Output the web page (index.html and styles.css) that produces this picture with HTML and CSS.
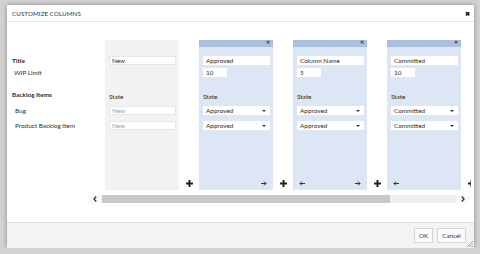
FILE: index.html
```html
<!DOCTYPE html>
<html>
<head>
<meta charset="utf-8">
<link rel="stylesheet" href="styles.css">
</head>
<body>
<div class="dialog">
  <div class="titlebar">
    <span class="title">CUSTOMIZE COLUMNS</span>
    <span class="close">&#10006;</span>
  </div>
  <div class="body">
    <div class="labels">
      <div class="head-spacer"></div>
      <div class="lrow r-name bold">Title</div>
      <div class="lrow r-wip sub">WIP Limit</div>
      <div class="lrow r-group bold">Backlog Items</div>
      <div class="lrow r-s1 sub2">Bug</div>
      <div class="lrow r-s2 sub2">Product Backlog Item</div>
    </div>
    <div class="board">
      <div class="viewport">
        <div class="track">
          <div class="col col-first">
            <div class="col-head"></div>
            <div class="field r-name">New</div>
            <div class="spacer r-wip"></div>
            <div class="state-label">State</div>
            <div class="field r-s1 placeholder">New</div>
            <div class="field r-s2 placeholder">New</div>
          </div>
          <div class="gap"><svg class="plus" width="7" height="7" viewBox="0 0 7 7"><path d="M3.5 0v7M0 3.5h7" stroke="#222" stroke-width="2"/></svg></div>

          <div class="col">
            <div class="col-head"><span class="x">&#10005;</span></div>
            <div class="field r-name">Approved</div>
            <div class="field r-wip wip">10</div>
            <div class="state-label">State</div>
            <div class="field select r-s1">Approved<span class="caret"></span></div>
            <div class="field select r-s2">Approved<span class="caret"></span></div>
            <div class="col-foot end">
              <svg width="6" height="5" viewBox="0 0 6 5"><path d="M0 2.5h5M3 0.5l2 2-2 2" stroke="#333" stroke-width="1" fill="none"/></svg>
            </div>
          </div>
          <div class="gap"><svg class="plus" width="7" height="7" viewBox="0 0 7 7"><path d="M3.5 0v7M0 3.5h7" stroke="#222" stroke-width="2"/></svg></div>

          <div class="col">
            <div class="col-head"><span class="x">&#10005;</span></div>
            <div class="field r-name">Column Name</div>
            <div class="field r-wip wip">5</div>
            <div class="state-label">State</div>
            <div class="field select r-s1">Approved<span class="caret"></span></div>
            <div class="field select r-s2">Approved<span class="caret"></span></div>
            <div class="col-foot between">
              <svg width="6" height="5" viewBox="0 0 6 5"><path d="M6 2.5h-5M3 0.5l-2 2 2 2" stroke="#333" stroke-width="1" fill="none"/></svg>
              <svg width="6" height="5" viewBox="0 0 6 5"><path d="M0 2.5h5M3 0.5l2 2-2 2" stroke="#333" stroke-width="1" fill="none"/></svg>
            </div>
          </div>
          <div class="gap"><svg class="plus" width="7" height="7" viewBox="0 0 7 7"><path d="M3.5 0v7M0 3.5h7" stroke="#222" stroke-width="2"/></svg></div>

          <div class="col">
            <div class="col-head"><span class="x">&#10005;</span></div>
            <div class="field r-name">Committed</div>
            <div class="field r-wip wip">10</div>
            <div class="state-label">State</div>
            <div class="field select r-s1">Committed<span class="caret"></span></div>
            <div class="field select r-s2">Committed<span class="caret"></span></div>
            <div class="col-foot start">
              <svg width="6" height="5" viewBox="0 0 6 5"><path d="M6 2.5h-5M3 0.5l-2 2 2 2" stroke="#333" stroke-width="1" fill="none"/></svg>
            </div>
          </div>
          <div class="gap"><svg class="plus" width="7" height="7" viewBox="0 0 7 7"><path d="M3.5 0v7M0 3.5h7" stroke="#222" stroke-width="2"/></svg></div>
        </div>
      </div>
      <div class="scrollbar">
        <div class="sb-btn"><svg width="4" height="6" viewBox="0 0 4 6"><path d="M3.2 0.5L1 3l2.2 2.5" stroke="#333" stroke-width="1.3" fill="none"/></svg></div>
        <div class="sb-thumb"></div>
        <div class="sb-rest"></div>
        <div class="sb-btn"><svg width="4" height="6" viewBox="0 0 4 6"><path d="M0.8 0.5L3 3 0.8 5.5" stroke="#333" stroke-width="1.3" fill="none"/></svg></div>
      </div>
    </div>
  </div>
  <div class="footer">
    <button class="btn">OK</button>
    <button class="btn">Cancel</button>
  </div>
  <svg class="grip" width="6" height="6" viewBox="0 0 6 6"><path d="M6 0L0 6M6 2.5L2.5 6M6 5L5 6" stroke="#888" stroke-width="0.8"/></svg>
</div>
</body>
</html>
```

FILE: styles.css
```css
* { box-sizing: border-box; }
html, body { margin: 0; }
body {
  background: #d3d3d3;
  padding: 5px 0 0 7px;
  font-family: Lato, "Open Sans", sans-serif;
  font-size: 6.4px;
  color: #2b2b2b;
}
.dialog {
  position: relative;
  width: 467px;
  height: 243px;
  background: #fff;
  box-shadow: 0 0 5px rgba(0,0,0,0.35);
  display: flex;
  flex-direction: column;
}
.titlebar {
  height: 17px;
  border-bottom: 1px solid #e4e4e4;
  display: flex;
  align-items: center;
  justify-content: space-between;
  padding: 0 4px 0 5px;
  flex: none;
}
.title { font-size: 6.2px; color: #333; letter-spacing: 0.1px; }
.close { font-size: 6px; color: #111; font-weight: bold; }
.body {
  flex: 1;
  display: flex;
}
.labels {
  width: 80px;
  padding-top: 18px;
  display: flex;
  flex-direction: column;
}
.head-spacer { height: 7px; flex: none; }
.lrow { display: flex; align-items: center; padding-left: 5px; }
.bold { font-weight: bold; }
.sub { padding-left: 7px; }
.sub2 { padding-left: 8px; }
.r-name { margin-top: 9px; height: 9px; }
.r-wip { margin-top: 3px; height: 9px; }
.r-group { margin-top: 13px; height: 8px; }
.r-s1 { margin-top: 29px; height: 9px; }
.lrow.r-s1 { margin-top: 8px; }
.r-s2 { margin-top: 6px; height: 9px; }

.board {
  width: 384px;
  padding-top: 18px;
}
.viewport {
  width: 384px;
  height: 150px;
  overflow: hidden;
}
.track {
  display: flex;
  padding-left: 18px;
  height: 150px;
}
.col {
  flex: none;
  width: 74px;
  height: 150px;
  background: #dce6f4;
  display: flex;
  flex-direction: column;
}
.col-first { background: #f2f2f2; }
.col-head {
  height: 7px;
  background: #a9c0e0;
  display: flex;
  justify-content: flex-end;
  align-items: center;
  padding-right: 3px;
  flex: none;
}
.col-first .col-head { background: transparent; }
.x { font-size: 4.5px; color: #2a3550; font-weight: bold; line-height: 1; }
.field {
  margin-left: 4px;
  width: 67px;
  background: #fff;
  display: flex;
  align-items: center;
  padding-left: 3px;
  flex: none;
  position: relative;
}
.col-first .field { border: 1px solid #e6e6e6; padding-left: 2px; }
.wip { width: 24px; }
.spacer { height: 9px; }
.placeholder { color: #9a9a9a; }
.state-label {
  margin: 16px 0 0 4px;
  height: 8px;
  line-height: 8px;
  flex: none;
}
.state-label + .r-s1 { margin-top: 5px; }
.select { justify-content: space-between; padding-right: 4px; }
.caret {
  width: 0; height: 0;
  border-left: 2px solid transparent;
  border-right: 2px solid transparent;
  border-top: 2px solid #333;
}
.col-foot {
  margin-top: auto;
  height: 11px;
  display: flex;
  align-items: center;
  padding: 0 6px 2px 6px;
}
.col-foot.end { justify-content: flex-end; }
.col-foot.start { justify-content: flex-start; }
.col-foot.between { justify-content: space-between; }
.gap {
  flex: none;
  width: 20px;
  display: flex;
  align-items: flex-end;
  justify-content: center;
  padding-bottom: 3px;
}
.scrollbar {
  margin: 5px 0 0 1px;
  width: 382px;
  height: 8px;
  display: flex;
  background: #efefef;
}
.sb-btn {
  width: 14px;
  display: flex;
  align-items: center;
  justify-content: center;
  background: #f7f7f7;
}
.sb-thumb { width: 288px; background: #c8c8c8; }
.sb-rest { flex: 1; }
.footer {
  height: 26px;
  flex: none;
  border-top: 1px solid #e0e0e0;
  background: #f3f3f3;
  display: flex;
  justify-content: flex-end;
  align-items: center;
  gap: 4px;
  padding-right: 8px;
}
.btn {
  font-family: inherit;
  font-size: 6.2px;
  color: #333;
  height: 15px;
  background: #fbfbfb;
  border: 1px solid #d4d4d4;
  border-radius: 0;
  margin: 0;
  padding: 0;
}
.btn:first-child { width: 19px; }
.btn:last-child { width: 29px; }
.grip { position: absolute; right: 1px; bottom: 1px; }
```
